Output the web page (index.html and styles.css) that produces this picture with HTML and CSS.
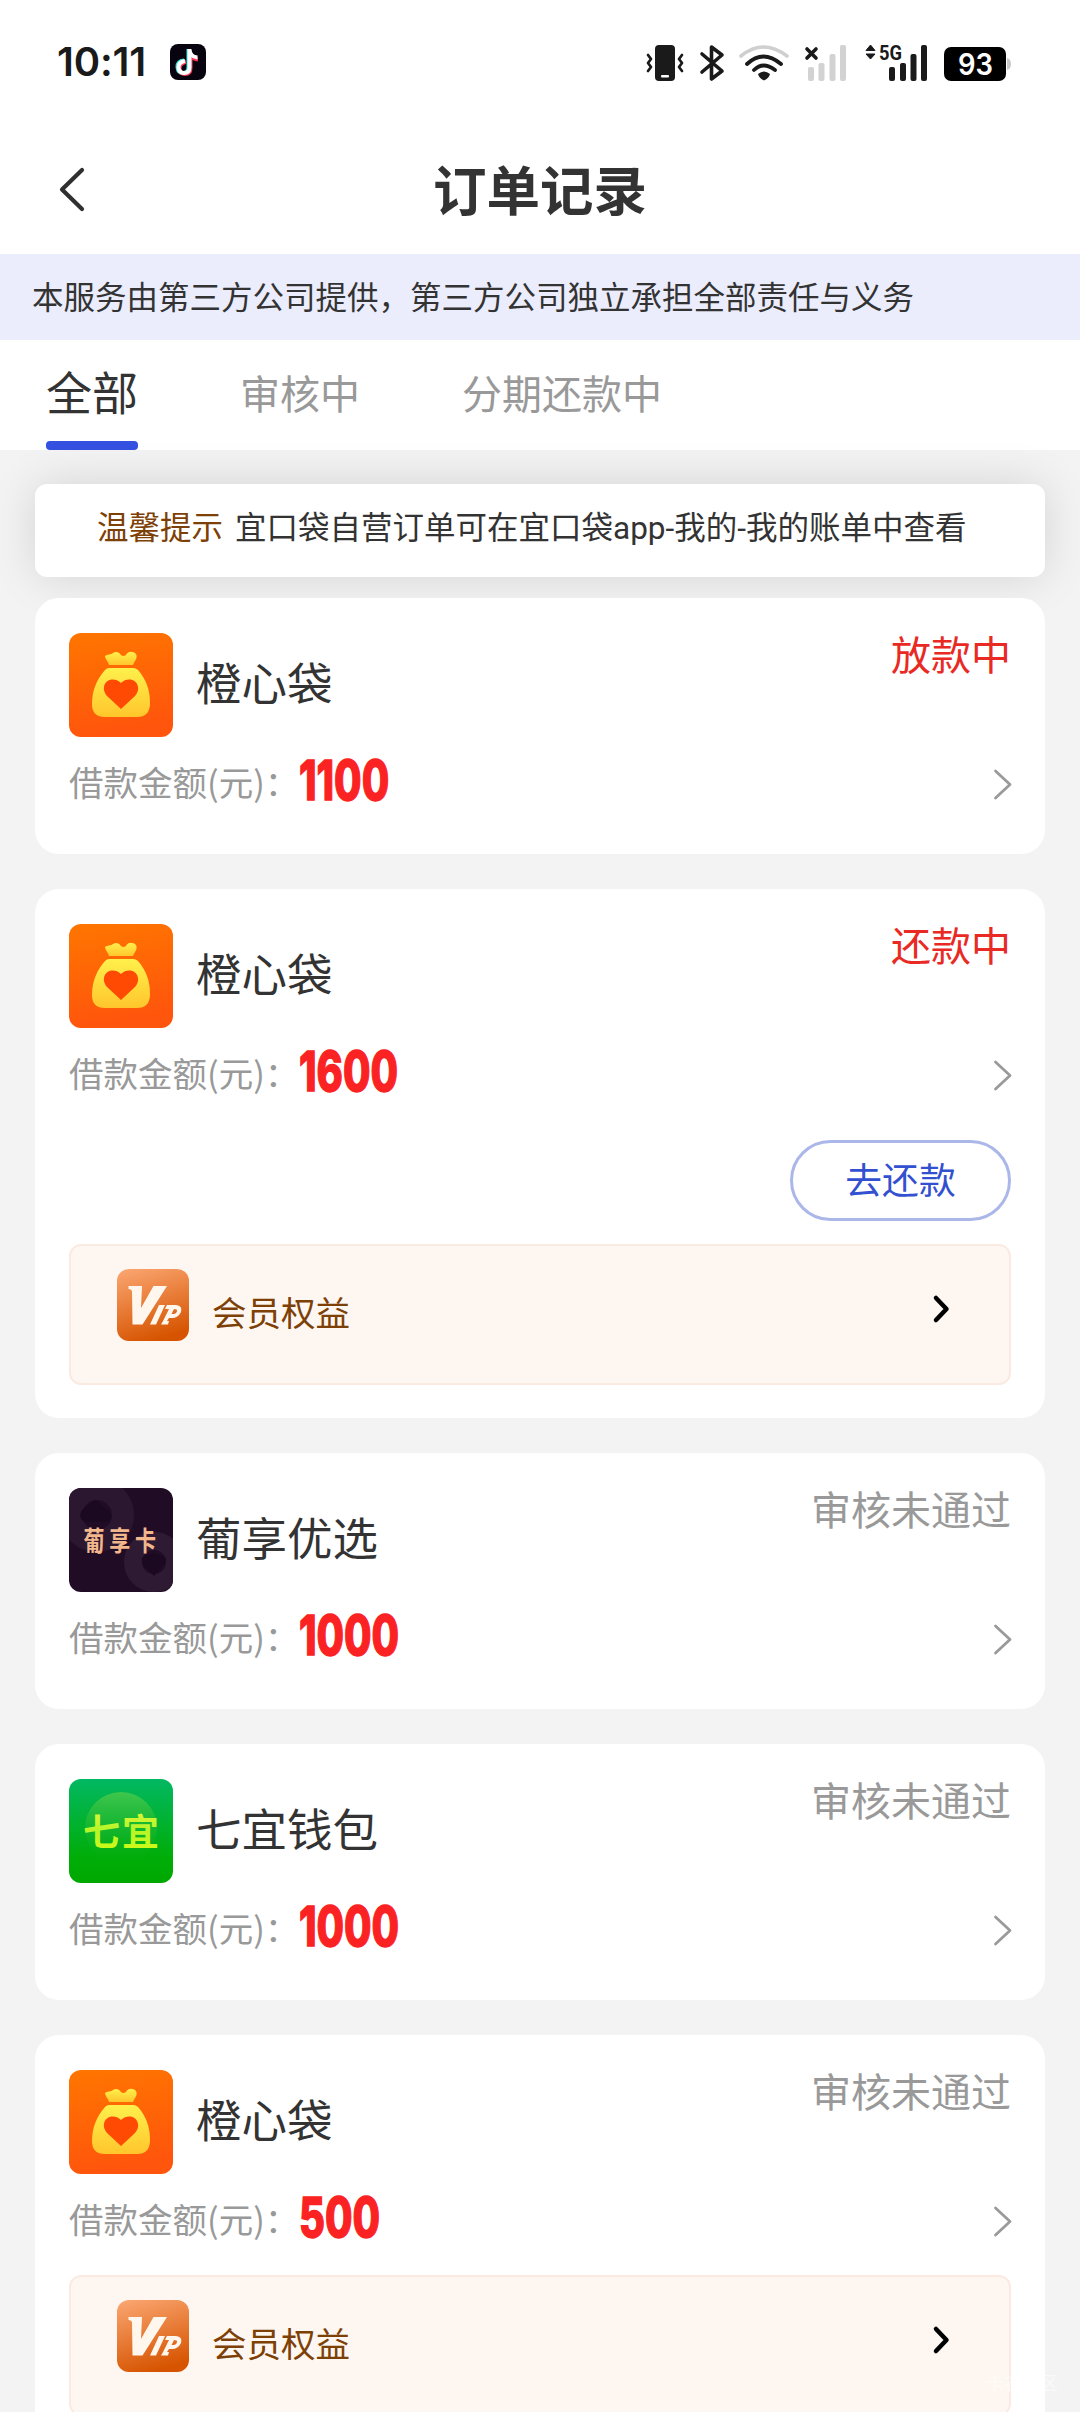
FILE: index.html
```html
<!DOCTYPE html>
<html lang="zh-CN">
<head>
<meta charset="utf-8">
<title>订单记录</title>
<link rel="stylesheet" href="styles.css">
</head>
<body>
<svg class="defs" aria-hidden="true">
  <defs>
    <linearGradient id="g-orange" x1="0" y1="0" x2="0.2" y2="1"><stop offset="0" stop-color="#ff7600"/><stop offset="1" stop-color="#ff550c"/></linearGradient>
    <linearGradient id="g-bag" x1="0" y1="0" x2="0" y2="1"><stop offset="0" stop-color="#fff04c"/><stop offset="1" stop-color="#ffc62c"/></linearGradient>
    <linearGradient id="g-green" x1="0" y1="0" x2="0" y2="1"><stop offset="0" stop-color="#02b862"/><stop offset="0.75" stop-color="#00ad08"/><stop offset="1" stop-color="#00a800"/></linearGradient>
    <linearGradient id="g-ball" x1="0" y1="0" x2="0" y2="1"><stop offset="0" stop-color="#3fc64d"/><stop offset="0.75" stop-color="#0fb020" stop-opacity="0.5"/><stop offset="1" stop-color="#00ad08" stop-opacity="0"/></linearGradient>
    <linearGradient id="g-lime" x1="0" y1="0" x2="0" y2="1"><stop offset="0" stop-color="#f2f43c"/><stop offset="0.5" stop-color="#b4f52a"/><stop offset="1" stop-color="#d8fa10"/></linearGradient>
    <linearGradient id="g-vip" x1="0.2" y1="0" x2="0.5" y2="1"><stop offset="0" stop-color="#f9a36d"/><stop offset="1" stop-color="#d65400"/></linearGradient>
  </defs>
  <symbol id="logo-bag" viewBox="0 0 104 104">
    <rect width="104" height="104" fill="url(#g-orange)"/>
    <path fill="url(#g-bag)" d="M40 32C39 28 36 26 36 23C38 21 42 22 44 20C47 18 50 19 52 22Q54 24 57 22C59 18 64 18 67 21C69 25 66 27 64 32Z"/>
    <path fill="url(#g-bag)" fill-rule="evenodd" d="M40 35H64Q67 35 69 37C77 46 81 57 81 70Q81 84 68 84H36Q23 84 23 71C23 57 28 46 36 37Q38 35 40 35Z"/>
    <path fill="#ff4a04" d="M52 76L38 63Q34 58 35 54C36 46 46 44 52 50C58 44 68 46 69 54Q70 58 66 63Z"/>
  </symbol>
  <symbol id="logo-vip" viewBox="0 0 72 72">
    <rect width="72" height="72" rx="12" fill="url(#g-vip)"/>
    <path fill="#fff7ee" d="M11.500 17H25L24 39L36.500 17H50L25.500 55.500H15.500L15 22Q14 20 11.500 20Z"/>
    <path fill="#fff7ee" d="M42 36H48L39 55.500H33Z"/>
    <path fill="#fff7ee" fill-rule="evenodd" d="M50 36H59Q66 37 64 43Q61 49 55 49H52L50 52H52L51 55.500H44L46 52L52 40H48ZM57 40L54.500 45H57Q60 44 60 41.500Q60 40 57 40Z"/>
  </symbol>
  <symbol id="chev" viewBox="0 0 20 32"><path d="M2.500 3L17 16.500L2.500 30" fill="none" stroke="#9a9a9a" stroke-width="2.800" stroke-linecap="round" stroke-linejoin="round"/></symbol>
  <symbol id="chev-bold" viewBox="0 0 20 32"><path d="M5 5L15.500 16L5 27" fill="none" stroke="#000" stroke-width="4.500" stroke-linecap="round" stroke-linejoin="round"/></symbol>
</svg>

<header class="status-bar">
  <span class="clock">10:11</span>
  <svg class="tiktok" viewBox="0 0 36 36">
    <rect width="36" height="36" rx="8" fill="#07040f"/>
    <g fill="none" stroke-width="4" stroke-linecap="butt">
      <path stroke="#35e3e0" d="M14 16.500Q7.500 17 7.500 23Q8 29 13 29Q18.500 29 18.500 23V5"/>
      <path stroke="#f5385a" d="M16 18Q10 19 9.500 24Q10 30 15 30Q20.500 30 20.500 24V12Q23 15 28 15.500"/>
      <path stroke="#fff" d="M15 17Q8.500 18 8.500 23.500Q9 29 14 29Q19.500 29 19.500 23.500V5Q20 13 27.500 13.500"/>
    </g>
  </svg>
  <svg class="sys" viewBox="0 0 370 40">
    <g fill="#1a1a1a">
      <rect x="10" y="2" width="20" height="36" rx="4"/>
      <rect x="16" y="32" width="8" height="2.500" rx="1" fill="#fff"/>
      <g fill="none" stroke="#1a1a1a" stroke-width="2.700" stroke-linecap="round" stroke-linejoin="round">
        <path d="M3 12L6 16L3 20L6 24L3 28M37 12L34 16L37 20L34 24L37 28"/>
        <path stroke-width="3.600" d="M57 11L77 28L66.500 36V4L77 12L57 29"/>
        <path stroke="#cfcfcf" stroke-width="3.600" d="M96 13Q118 -5 142 13"/>
        <path stroke-width="3.800" d="M102 21Q118 6 136 21M109 27Q118 18 130 27"/>
        <path stroke-width="3.600" d="M162 6L171 15M171 6L162 15"/>
      </g>
      <path d="M113 31Q119 26 125 31Q124 35 119 37.500Q114 35 113 31Z"/>
      <g fill="#d2d2d2"><rect x="163" y="24" width="6" height="14" rx="2"/><rect x="173.500" y="20" width="6" height="18" rx="2"/><rect x="184.500" y="11" width="6" height="27" rx="2"/><rect x="195" y="2" width="6" height="36" rx="2"/></g>
      <rect x="244" y="24" width="6" height="14" rx="2"/><rect x="255" y="20" width="6" height="18" rx="2"/><rect x="265.500" y="11" width="6" height="27" rx="2"/><rect x="276" y="2" width="6" height="36" rx="2"/>
      <path d="M221 7.500L225.500 2L230 7.500ZM221 11H230L225.500 16Z" stroke="#1a1a1a" stroke-width="1" stroke-linejoin="round"/>
      <rect x="299" y="4" width="62" height="34" rx="7" fill="#000"/>
      <path d="M362 15Q366 16 366 21Q366 26 362 27Z" fill="#c8c8c8"/>
    </g>
    <text class="net" x="234" y="17" textLength="23" lengthAdjust="spacingAndGlyphs">5G</text>
    <text class="battery" x="330.500" y="32" text-anchor="middle" textLength="35" lengthAdjust="spacingAndGlyphs">93</text>
  </svg>
</header>

<nav class="title-bar">
  <svg class="back" viewBox="0 0 30 46"><path d="M24 4L4 23.500L24 43" fill="none" stroke="#303030" stroke-width="4.200" stroke-linecap="round" stroke-linejoin="round"/></svg>
  <h1 class="title">订单记录</h1>
</nav>

<p class="notice">本服务由第三方公司提供，第三方公司独立承担全部责任与义务</p>

<div class="tabs">
  <span class="tab active">全部</span>
  <span class="tab">审核中</span>
  <span class="tab">分期还款中</span>
</div>

<main class="list">
  <div class="tip"><b class="tip-label">温馨提示</b><span>宜口袋自营订单可在宜口袋app-我的-我的账单中查看</span></div>

  <article class="card">
    <div class="head"><svg class="logo"><use href="#logo-bag"/></svg><h2 class="name">橙心袋</h2><span class="state hot">放款中</span></div>
    <div class="row"><span class="label">借款金额(元)：</span><span class="amount">1100</span><svg class="chev"><use href="#chev"/></svg></div>
  </article>

  <article class="card">
    <div class="head"><svg class="logo"><use href="#logo-bag"/></svg><h2 class="name">橙心袋</h2><span class="state hot">还款中</span></div>
    <div class="row"><span class="label">借款金额(元)：</span><span class="amount">1600</span><svg class="chev"><use href="#chev"/></svg></div>
    <button class="repay">去还款</button>
    <div class="vip after-button"><svg class="vip-icon"><use href="#logo-vip"/></svg><span class="vip-text">会员权益</span><svg class="chev vip-chev"><use href="#chev-bold"/></svg></div>
  </article>

  <article class="card">
    <div class="head">
      <svg class="logo" viewBox="0 0 104 104">
        <rect width="104" height="104" fill="#200d25"/>
        <circle cx="28" cy="27" r="26" fill="none" stroke="#2b1730" stroke-width="22"/>
        <circle cx="85" cy="74" r="21" fill="none" stroke="#2f1a34" stroke-width="18"/>
        <path d="M26 12L41 24Q45 33 35 34H17Q8 31 13 22Z" fill="#1b0921"/>
        <path d="M85 88L74 77Q70 67 80 67Q85 64 90 67Q101 69 95 77Z" fill="#1b0921"/>
        <text class="card-logo" transform="translate(14.500 63) scale(.78 1)" letter-spacing="6">葡享卡</text>
      </svg>
      <h2 class="name">葡享优选</h2><span class="state">审核未通过</span></div>
    <div class="row"><span class="label">借款金额(元)：</span><span class="amount">1000</span><svg class="chev"><use href="#chev"/></svg></div>
  </article>

  <article class="card">
    <div class="head">
      <svg class="logo" viewBox="0 0 104 104">
        <rect width="104" height="104" fill="url(#g-green)"/>
        <circle cx="52" cy="49" r="36" fill="url(#g-ball)"/>
        <text class="wallet-logo" x="14" y="67" letter-spacing="2">七宜</text>
      </svg>
      <h2 class="name">七宜钱包</h2><span class="state">审核未通过</span></div>
    <div class="row"><span class="label">借款金额(元)：</span><span class="amount">1000</span><svg class="chev"><use href="#chev"/></svg></div>
  </article>

  <article class="card">
    <div class="head"><svg class="logo"><use href="#logo-bag"/></svg><h2 class="name">橙心袋</h2><span class="state">审核未通过</span></div>
    <div class="row"><span class="label">借款金额(元)：</span><span class="amount">500</span><svg class="chev"><use href="#chev"/></svg></div>
    <div class="vip"><svg class="vip-icon"><use href="#logo-vip"/></svg><span class="vip-text">会员权益</span><svg class="chev vip-chev"><use href="#chev-bold"/></svg></div>
  </article>
</main>
<span class="watermark">卡农社区</span>
</body>
</html>
```
FILE: styles.css
```css
* { box-sizing: border-box; }

body {
  position: relative;
  width: 1080px;
  height: 2412px;
  margin: 0;
  overflow: hidden;
  background: #f3f3f3;
  color: #333;
  font-family: "Noto Sans CJK SC", sans-serif;
  display: flex;
  flex-direction: column;
}

h1, h2, p { margin: 0; font-weight: 400; }
svg { display: block; flex: none; }
.defs { position: absolute; width: 0; height: 0; }

.status-bar,
.title-bar,
.notice,
.tabs,
.list { flex: none; }

.status-bar {
  display: flex;
  align-items: center;
  height: 124px;
  padding: 0 57px;
  background: #fff;
}
.clock {
  width: 113px;
  font: 600 40px/124px Inter, sans-serif;
  letter-spacing: -.2px;
  color: #1a1a1a;
  white-space: nowrap;
}
.tiktok { width: 36px; height: 36px; }
.sys { width: 370px; height: 40px; margin-left: 439px; margin-top: 2px; overflow: visible; }
.net { font: 700 20px Roboto, sans-serif; fill: #1a1a1a; }
.battery { font: 600 30px Inter, sans-serif; fill: #fff; }

.title-bar {
  display: flex;
  align-items: center;
  height: 130px;
  padding: 0 56px 0 58px;
  background: #fff;
}
.back { width: 30px; height: 46px; }
.title {
  flex: 1;
  margin-right: 32px;
  text-align: center;
  font-size: 53.500px;
  line-height: 127px;
  height: 130px;
  font-weight: 700;
}

.notice {
  height: 86px;
  padding-left: 32px;
  background: #ebedfd;
  font-size: 31.500px;
  line-height: 83px;
  white-space: nowrap;
}

.tabs {
  display: flex;
  gap: 102px;
  height: 110px;
  padding-left: 46px;
  background: #fff;
}
.tab {
  height: 110px;
  font-size: 40px;
  line-height: 105px;
  color: #999;
}
.tab.active {
  position: relative;
  color: #333;
  font-size: 46px;
  line-height: 101px;
}
.tab.active::after {
  content: "";
  position: absolute;
  left: 0;
  bottom: 0;
  width: 92px;
  height: 9px;
  border-radius: 4px;
  background: #3350e0;
}

.list { padding: 34px 35px 0; }

.tip {
  display: flex;
  gap: 12px;
  height: 93px;
  margin-bottom: 21px;
  padding-left: 62px;
  border-radius: 12px;
  background: #fff;
  box-shadow: 0 0 46px rgba(0, 0, 0, .13);
  font-family: Roboto, "Noto Sans CJK SC", sans-serif;
  font-size: 31.500px;
  line-height: 90px;
  white-space: nowrap;
}
.tip-label { color: #7d4006; font-weight: 400; }

.card {
  margin-bottom: 35px;
  padding: 35px 34px;
  border-radius: 24px;
  background: #fff;
}
.head { display: flex; align-items: flex-start; height: 104px; }
.logo { width: 104px; height: 104px; border-radius: 12px; }
.name {
  flex: 1;
  margin-left: 23px;
  font-size: 45.500px;
  line-height: 96px;
}
.state { font-size: 40px; line-height: 41px; color: #999; }
.state.hot { color: #e92a24; }

.row {
  display: flex;
  align-items: center;
  height: 70px;
  margin-top: 12px;
}
.label { height: 70px; font-size: 34.500px; line-height: 65px; color: #999; white-space: nowrap; }
.amount {
  flex: 1;
  font: 800 54.500px/62px Inter, sans-serif;
  -webkit-text-stroke: 1.300px #fa2222;
  color: #fa2222;
  transform: scaleX(.73);
  transform-origin: left;
  margin-top: -9px;
}
.chev { width: 20px; height: 32px; margin-right: -2px; }

.repay {
  display: block;
  width: 221px;
  height: 81px;
  margin: 30px 0 0 auto;
  padding: 0 0 5px;
  border: 3px solid #abb7e8;
  border-radius: 41px;
  background: #fff;
  color: #3350d0;
  font: 400 36.800px/70px "Noto Sans CJK SC", sans-serif;
}

.vip {
  display: flex;
  height: 141px;
  margin-top: 19px;
  margin-bottom: -1px;
  padding: 23px 58px 0 46px;
  border: 2px solid #fbeae1;
  border-radius: 12px;
  background: #fef7f1;
}
.vip.after-button { margin-top: 23px; margin-bottom: -2px; }
.vip-icon { width: 72px; height: 72px; }
.vip-text {
  flex: 1;
  margin-left: 23px;
  font-size: 34.500px;
  line-height: 84px;
  color: #7d4006;
}
.vip-chev { margin-top: 24px; margin-right: 0; }

.card-logo { font: 700 27px "Noto Sans CJK SC", sans-serif; fill: #f3b78c; }
.wallet-logo { font: 700 37px "Noto Sans CJK SC", sans-serif; fill: url(#g-lime); }

.watermark {
  position: absolute;
  right: 22px;
  bottom: 17px;
  font-size: 18px;
  line-height: 26px;
  color: rgba(255, 255, 255, .6);
}
```
